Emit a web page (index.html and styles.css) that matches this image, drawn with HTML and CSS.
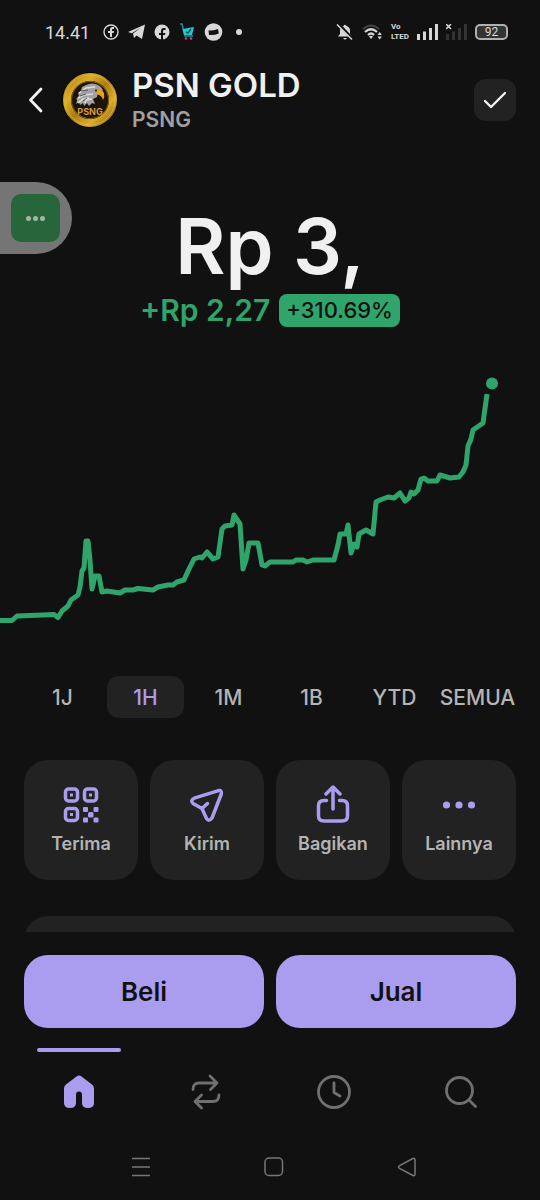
FILE: index.html
```html
<!DOCTYPE html>
<html lang="id">
<head>
    <meta charset="UTF-8">
    <meta name="viewport" content="width=device-width, initial-scale=1.0">
    <title>PSN GOLD</title>
    <link rel="stylesheet" href="styles.css">
</head>
<body>
    <!-- status bar -->
    <div class="status-bar">
        <div class="status-left">
            <span class="clock">14.41</span>
            <svg width="16" height="16" viewBox="0 0 16 16"><circle cx="8" cy="8" r="7" fill="none" stroke="#d8d8d8" stroke-width="1.4"/><path d="M7 13V9H5V7h2V5.600Q7 3 9.500 3H11v2H9.700Q9 5 9 5.900V7h2l-.4 2H9v4z" fill="#d8d8d8"/></svg>
            <svg width="17" height="16" viewBox="0 0 17 16"><path d="M0 8 17 0.500 14 15 8.500 11.500 6 14 5 9.500 13 3.500 3.800 9.200z" fill="#d8d8d8"/></svg>
            <svg width="16" height="16" viewBox="0 0 16 16"><circle cx="8" cy="8" r="7.500" fill="#d8d8d8"/><path d="M7 16v-5H5V9h2V7.200Q7 4 9.800 4H11.500v2H10Q9 6 9 7.300V9h2.400l-.4 2H9v5z" fill="#111"/></svg>
            <svg width="16" height="18" viewBox="0 0 16 18"><path d="M1 1h2l3 12h8" fill="none" stroke="#1c8f98" stroke-width="1.500"/><path d="M3.500 6 15 4l-2 8H5z" fill="#20cbd6"/><path d="m7 9 2 1 3-4" fill="none" stroke="#0b4850" stroke-width="1.500"/><circle cx="7" cy="15.500" r="1.300" fill="#d84858"/><circle cx="12" cy="15.500" r="1.300" fill="#d84858"/></svg>
            <svg width="19" height="18" viewBox="0 0 19 18"><circle cx="9.500" cy="9" r="8.800" fill="#d8d8d8"/><path d="M4.500 7.500q4 .5 9.500-1.500l.8 4.500Q10 12.500 5 12z" fill="#111"/></svg>
            <span class="status-dot"></span>
        </div>
        <div class="status-right">
            <svg width="18" height="18" viewBox="0 0 18 18"><path d="M2 13.500 4 11V7.500Q4 4 7.500 3 9 .5 10.500 3 14 4 14 7.500V11l2 2.500zM7 15h4q-2 3-4 0" fill="#d8d8d8"/><path d="m2 .5 15 16" stroke="#111" stroke-width="3"/><path d="m1 1.500 15 15" stroke="#d8d8d8" stroke-width="1.500"/></svg>
            <svg width="21" height="18" viewBox="0 0 21 18"><path d="M1 6q8-7 16 0" fill="none" stroke="#444" stroke-width="2"/><path d="M3 9q6-5.500 12 0M6 12q3-3 6 0" fill="none" stroke="#d8d8d8" stroke-width="2.200"/><path d="m9 16-2-2.500q2-1.500 4 0zM15.500 12l2.200-3 2.200 3zM15.500 13.500l2.200 3 2.200-3z" fill="#d8d8d8"/></svg>
            <span class="volte">Vo<br>LTED</span>
            <svg width="21" height="16" viewBox="0 0 21 16"><path d="M0 10h3v6H0zM6 7.500h3V16H6zM12 4h3v12h-3zM18 0h3v16h-3z" fill="#d8d8d8"/></svg>
            <svg width="21" height="16" viewBox="0 0 21 16"><path d="M0 10h3v6H0zM6 7.500h3V16H6zM12 4h3v12h-3zM18 0h3v16h-3z" fill="#333"/><path d="m0 0 5 5m0-5L0 5" stroke="#d8d8d8" stroke-width="1.500"/></svg>
            <span class="battery">92</span>
        </div>
    </div>

    <header class="header">
        <button class="back" aria-label="Kembali">
            <svg width="16" height="26" viewBox="0 0 16 26"><path d="M13 2 2.500 13 13 24" fill="none" stroke="#f2f2f2" stroke-width="2.800" stroke-linecap="round" stroke-linejoin="round"/></svg>
        </button>
        <svg width="56" height="56" viewBox="0 0 56 56">
            <defs>
                <linearGradient id="gold" x1="0" y1="0" x2="1" y2="1">
                    <stop offset="0" stop-color="#a87a10"/>
                    <stop offset=".25" stop-color="#dcae2a"/>
                    <stop offset=".5" stop-color="#ad7c14"/>
                    <stop offset=".75" stop-color="#dcae2a"/>
                    <stop offset="1" stop-color="#8c610b"/>
                </linearGradient>
            </defs>
            <circle cx="28" cy="28" r="28" fill="#080705"/>
            <circle cx="28" cy="28" r="23" fill="#1c1309" stroke="url(#gold)" stroke-width="8"/>
            <circle cx="28" cy="28" r="25" fill="none" stroke="#e6c04a" stroke-width=".6"/>
            <circle cx="28" cy="28" r="18.500" fill="none" stroke="#80600f"/>
            <path d="M14 32q2-5 0-5l3-3-1-3 3-2 1-4 4-2q6-3 12 0 4 2 5 5-2 3-5 3l-1 4-4 2 2 5-3-1-3 3-2-3-3 3-1-3-3 2-1-3z" fill="#a2a2a4"/>
            <path d="m17 21 7-5 9-1M16 26l6-3 9-1M16 31l5-4 6-1M23 31l1-3 6-1" fill="none" stroke="#dedede" stroke-width="1.500"/>
            <path d="m19 19 7-1M18 24l6-2M21 29l4-3" stroke="#555" stroke-width="1"/>
            <path d="M35 18q5-1 7 3 1 4-1 7-1-5-7-6z" fill="#eaa514"/>
            <circle cx="34" cy="18.500" r="1" fill="#151515"/>
            <text x="28" y="43" text-anchor="middle" class="coin-text">PSNG</text>
        </svg>
        <div class="names">
            <h1>PSN GOLD</h1>
            <p>PSNG</p>
        </div>
        <button class="check" aria-label="Pilih">
            <svg width="24" height="20" viewBox="0 0 24 20"><path d="m2 11 6 6L22 3" fill="none" stroke="#f2f2f2" stroke-width="2.400" stroke-linecap="round" stroke-linejoin="round"/></svg>
        </button>
    </header>

    <button class="bubble" aria-label="Menu"><span class="bubble-icon"><i></i><i></i><i></i></span></button>

    <main>
        <section class="price">
            <div class="amount">Rp 3,</div>
            <div class="change">
                <span>+Rp 2,27</span>
                <span class="percent">+310.69%</span>
            </div>
        </section>

        <svg class="chart" viewBox="0 360 540 280">
            <polyline points="0,620.5 12,620.5 17,616 30,615.5 54,614.5 58,617.5 62,611 68,606 71,600 78,595 80,587 82,571 84,568 86,541 88,541 90,560 92,589 95,576 99,576 102,592 107,591 120,593 125,590 133,590 138,588.5 153,590 158,587 168,585 173,585 177,582 184,580 188,571 194,559 200,557 202,558 207,552 213,559 218,557 222,529 225,526 232,525 234,515 240,524 243,569 246,560 249,543 258,543 262,565 265,566 270,562 293,562 296,560 303,560 307,562 313,560 334,560 338,545 340,534 346,534 348,525 351,553 354,544 357,547 359,534 366,530 373,534 376,502 380,500 388,497 394,498 400,493 405,501 409,498 411,492 414,494 418,490 421,479 424,478 428,481 437,481 440,475 450,478 459,477 463,472 466,465 468,446 471,439 473,430 483,423 487,394"/>
            <circle cx="492" cy="383.500" r="6"/>
        </svg>

        <div class="ranges">
            <button>1J</button>
            <button class="active">1H</button>
            <button>1M</button>
            <button>1B</button>
            <button>YTD</button>
            <button>SEMUA</button>
        </div>

        <div class="actions">
            <button>
                <svg width="40" height="40" viewBox="0 0 40 40" fill="none" stroke="#aa9df0" stroke-width="3.500">
                    <rect x="4.500" y="4" width="12" height="12" rx="3"/>
                    <rect x="23.500" y="4" width="12" height="12" rx="3"/>
                    <rect x="4.500" y="23.500" width="12" height="12" rx="3"/>
                    <g fill="#aa9df0" stroke="none">
                        <path d="M9 8.500h3v3H9zM28 8.500h3v3h-3zM9 28h3v3H9z"/>
                        <rect x="22" y="22" width="5" height="5" rx="1"/>
                        <rect x="32.500" y="22" width="5" height="5" rx="1"/>
                        <rect x="27" y="27" width="5.500" height="5.500" rx="1.500"/>
                        <rect x="22" y="32.500" width="5" height="5" rx="1"/>
                        <rect x="32.500" y="32.500" width="5" height="5" rx="1"/>
                    </g>
                </svg>
                Terima
            </button>
            <button>
                <svg width="40" height="40" viewBox="0 0 40 40" fill="none" stroke="#aa9df0" stroke-width="3.500" stroke-linecap="round" stroke-linejoin="round"><path d="M31.500 5.600 8 12.800Q2.500 15.500 6 18.500L15 23.500 19.500 33.500Q22 37 25 33L34.300 9Q35 5 31.500 5.600M15 23.500l5.500-5"/></svg>
                Kirim
            </button>
            <button>
                <svg width="40" height="40" viewBox="0 0 40 40" fill="none" stroke="#aa9df0" stroke-width="3.500" stroke-linecap="round" stroke-linejoin="round"><path d="M13.500 15.500H11q-5.500 0-5.500 5.500v10q0 5 5.500 5h18q5.500 0 5.500-5V21q0-5.500-5.500-5.500h-2.500M20 24V2M13 9 20 2l7 7"/></svg>
                Bagikan
            </button>
            <button>
                <svg width="40" height="40" viewBox="0 0 40 40" fill="#aa9df0"><circle cx="7.500" cy="20" r="3.600"/><circle cx="20" cy="20" r="3.600"/><circle cx="32.500" cy="20" r="3.600"/></svg>
                Lainnya
            </button>
        </div>

        <div class="peek"><div class="panel"></div></div>
    </main>

    <div class="trade">
        <button>Beli</button>
        <button>Jual</button>
    </div>

    <nav class="tabs">
        <a href="#" class="current" aria-label="Beranda">
            <svg width="36" height="36" viewBox="0 0 36 36"><path d="M15.500 2.600q2.500-2 5 0L31 10.500q2 1.600 2 4V29q0 5-6 5-6 0-6-5v-8.500q0-3-3-3t-3 3V29q0 5-6 5-6 0-6-5V14.500q0-2.400 2-4z" fill="#aa9df0"/></svg>
        </a>
        <a href="#" aria-label="Tukar">
            <svg width="36" height="36" viewBox="0 0 36 36"><path d="M5 15.500q0-6.500 6-6.500h18M22 2l7 7-6.500 6.500M31 21q0 6.500-6 6.500H7M13.500 21 7 27.500l6.500 6.500"/></svg>
        </a>
        <a href="#" aria-label="Riwayat">
            <svg width="36" height="36" viewBox="0 0 36 36"><circle cx="18" cy="18" r="15.500"/><path d="M18 9v9.500l6 3.500"/></svg>
        </a>
        <a href="#" aria-label="Cari">
            <svg width="36" height="36" viewBox="0 0 36 36"><circle cx="16.500" cy="16.500" r="13"/><path d="m26 26 6.500 6.500"/></svg>
        </a>
    </nav>

    <!-- Android navigation -->
    <div class="system-nav">
        <button aria-label="Aplikasi terbaru"><svg width="20" height="20" viewBox="0 0 20 20"><path d="M1 1.500h18M1 10h18M1 18.500h18"/></svg></button>
        <button aria-label="Layar utama"><svg width="20" height="20" viewBox="0 0 20 20"><rect x="1" y="1" width="17.500" height="17.500" rx="4"/></svg></button>
        <button aria-label="Kembali"><svg width="20" height="20" viewBox="0 0 20 20"><path d="M16 1.500 2.500 8.600q-2 1.400 0 2.800L16 18.500q2 .6 2-1.500V3q0-2.100-2-1.500"/></svg></button>
    </div>
</body>
</html>
```
FILE: styles.css
```css
* {
    box-sizing: border-box;
}
body {
    background-color: #111111;
    color: #f0f0f0;
    font-family: Inter, "Liberation Sans", sans-serif;
    margin: 0;
    min-height: 100vh;
    display: flex;
    flex-direction: column;
    position: relative;
    overflow-x: hidden;
}
button {
    background: none;
    border: 0;
    padding: 0;
    color: inherit;
    font-family: inherit;
    cursor: pointer;
}
svg {
    display: block;
    flex: none;
}

/* status bar */
.status-bar {
    height: 64px;
    padding: 0 32px 0 45px;
    display: flex;
    justify-content: space-between;
    align-items: center;
    font-family: Roboto, sans-serif;
    color: #d8d8d8;
}
.status-left, .status-right {
    display: flex;
    align-items: center;
    gap: 9px;
}
.status-right {
    gap: 8px;
}
.clock {
    font-size: 18px;
    margin-right: 4px;
}
.status-dot {
    width: 6px;
    height: 6px;
    margin-left: 4px;
    border-radius: 50%;
    background: #d8d8d8;
}
.volte {
    font-size: 8px;
    line-height: 10px;
    font-weight: 700;
}
.battery {
    width: 33px;
    height: 16px;
    border: 2px solid #b0b0b0;
    border-radius: 5px;
    background: #333333;
    font-size: 12px;
    line-height: 12px;
    text-align: center;
}

/* token header */
.header {
    height: 72px;
    padding: 0 24px;
    display: flex;
    align-items: center;
}
.back {
    padding: 4px;
    width: 38px;
}
.coin-text {
    font-size: 9px;
    font-weight: 700;
    fill: #d99a3a;
}
.names {
    flex: 1;
    margin-left: 14px;
}
h1, p {
    margin: 0;
    font-weight: 600;
}
h1 {
    font-size: 33px;
    line-height: 40px;
}
p {
    font-size: 21px;
    line-height: 30px;
    color: #a0a0a0;
}
.check {
    width: 42px;
    height: 42px;
    border-radius: 12px;
    background: #222222;
    display: flex;
    align-items: center;
    justify-content: center;
}

/* floating shortcut over the page */
.bubble {
    position: absolute;
    top: 182px;
    left: 0;
    width: 72px;
    height: 72px;
    padding-left: 11px;
    background: #757575;
    border-radius: 0 36px 36px 0;
}
.bubble-icon {
    width: 49px;
    height: 48px;
    border-radius: 10px;
    background: #27663a;
    display: flex;
    align-items: center;
    justify-content: center;
    gap: 2px;
}
.bubble-icon i {
    width: 5px;
    height: 5px;
    border-radius: 50%;
    background: #a0b8a5;
}

main {
    flex: 1;
}
.price {
    padding-top: 65px;
    text-align: center;
}
.amount {
    font-size: 77px;
    line-height: 90px;
    font-weight: 600;
}
.change {
    display: flex;
    justify-content: center;
    align-items: center;
    gap: 9px;
    font-size: 30px;
    line-height: 38px;
    font-weight: 600;
    color: #2fa56c;
}
.percent {
    padding: 0 7px;
    border-radius: 8px;
    background: #2fa56c;
    color: #111111;
    font-size: 22px;
    line-height: 33px;
    font-weight: 500;
}
.chart {
    width: 100%;
    margin-top: 31px;
    fill: #2fa56c;
}
.chart polyline {
    fill: none;
    stroke: #2fa56c;
    stroke-width: 5;
    stroke-linejoin: round;
}
.ranges {
    margin: 36px 24px 0;
    display: grid;
    grid-template-columns: repeat(6, 1fr);
    gap: 6px;
}
.ranges button {
    min-width: 0;
    height: 42px;
    border-radius: 12px;
    font-size: 21px;
    font-weight: 500;
    color: #b4b4b4;
}
.ranges .active {
    background: #222222;
    color: #aa9df0;
}
.actions {
    margin: 42px 24px 36px;
    display: grid;
    grid-template-columns: repeat(4, 1fr);
    gap: 12px;
}
.actions button {
    height: 120px;
    border-radius: 24px;
    background: #222222;
    color: #b4b4b4;
    font-size: 18px;
    line-height: 22px;
    font-weight: 600;
    display: flex;
    flex-direction: column;
    align-items: center;
    padding-top: 25px;
    gap: 8px;
}
/* only the top edge of the next card is visible */
.peek {
    height: 16px;
    margin: 0 24px;
    overflow: hidden;
}
.panel {
    height: 60px;
    border-radius: 24px;
    background: #222222;
}

.trade {
    padding: 23px 24px 20px;
    display: grid;
    grid-template-columns: 1fr 1fr;
    gap: 12px;
}
.trade button {
    height: 73px;
    border-radius: 24px;
    background: #aa9df0;
    color: #111111;
    font-size: 26px;
    font-weight: 600;
}
.tabs {
    padding: 0 15px;
    display: grid;
    grid-template-columns: repeat(4, 1fr);
}
.tabs a {
    height: 85px;
    padding-top: 22px;
    border-top: 4px solid transparent;
    display: flex;
    justify-content: center;
    position: relative;
}
.tabs svg {
    fill: none;
    stroke: #707070;
    stroke-width: 2.800;
    stroke-linecap: round;
    stroke-linejoin: round;
}
.tabs .current svg {
    stroke: none;
}
.current::before {
    content: "";
    position: absolute;
    top: -4px;
    width: 84px;
    height: 4px;
    border-radius: 2px;
    background: #aa9df0;
}
.system-nav {
    height: 67px;
    padding: 0 67px 0 75px;
    display: grid;
    grid-template-columns: repeat(3, 1fr);
    justify-items: center;
}
.system-nav svg {
    fill: none;
    stroke: #777777;
    stroke-width: 1.500;
}
```
